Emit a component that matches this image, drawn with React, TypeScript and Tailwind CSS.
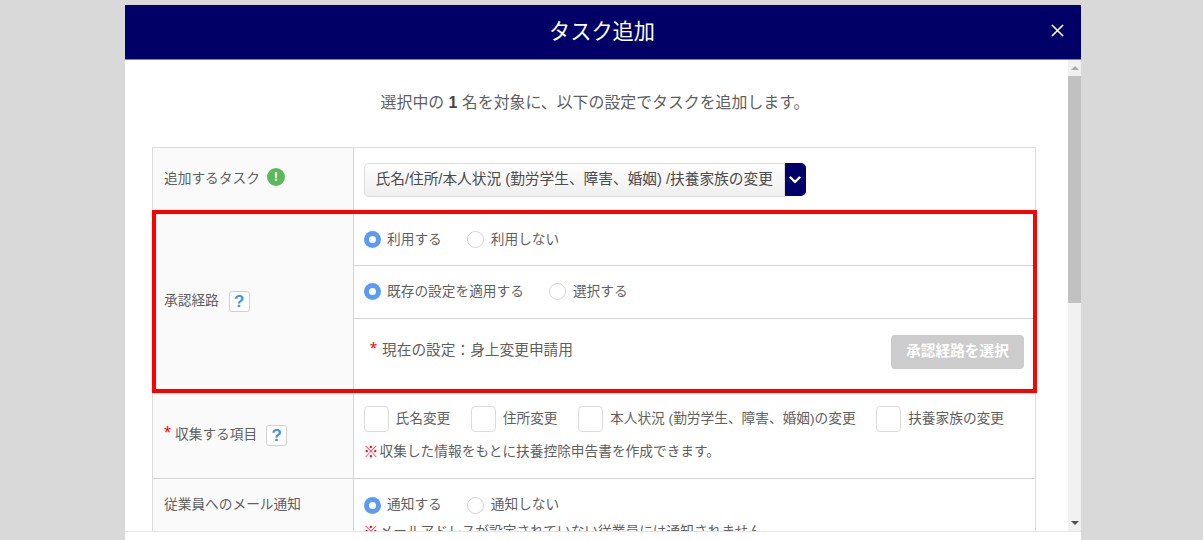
const font = '"Liberation Sans", "Noto Sans CJK JP", sans-serif';

function Radio({ on, label }: { on?: boolean; label: string }) {
  return (
    <div className="flex items-center">
      {on ? (
        <span className="w-[17px] h-[17px] rounded-full bg-[#5b9cf2] flex items-center justify-center">
          <span className="w-[7px] h-[7px] rounded-full bg-white" />
        </span>
      ) : (
        <span className="w-[17px] h-[17px] rounded-full bg-white border border-[#d4d4d4]" />
      )}
      <span className="ml-[6.5px]">{label}</span>
    </div>
  );
}

function Check({ label }: { label: string }) {
  return (
    <div className="flex items-center">
      <span className="w-[25px] h-[26px] rounded-[4px] bg-white border border-[#dcdcdc]" />
      <span className="ml-[7px]">{label}</span>
    </div>
  );
}

function Help() {
  return (
    <span className="w-[21px] h-[21px] rounded-[3px] bg-white border border-[#d0d0d0] flex items-center justify-center text-[#4a90e2] font-bold text-[17px] leading-none">
      ?
    </span>
  );
}

function Chevron() {
  return (
    <svg width="12" height="8" viewBox="0 0 12 8" fill="none" stroke="white" strokeWidth="2.4" strokeLinecap="round" strokeLinejoin="round">
      <path d="M1.5 1.5 L6 6 L10.5 1.5" />
    </svg>
  );
}

export default function App() {
  return (
    <div className="h-[540px] overflow-hidden bg-[#d9d9d9] pt-[5px] pl-[125px] text-[#5f5f5f] text-[13.7px]" style={{ fontFamily: font }}>
      <div className="w-[956px] h-[535px] bg-white flex flex-col">
        <div className="h-[55px] shrink-0 bg-[#000066] border-b border-[#8080b3] flex items-center justify-center relative text-white text-[21.2px]">
          <span className="pr-[2px]">タスク追加</span>
          <svg className="absolute right-[17px] top-[19px]" width="13" height="13" viewBox="0 0 13 13" stroke="white" strokeWidth="1.6" fill="none">
            <path d="M1 1 L12 12 M12 1 L1 12" />
          </svg>
        </div>

        <div className="h-[471px] shrink-0 flex">
          <div className="flex-1 overflow-hidden pl-[27px] pr-[32px]">
            <p className="h-[87px] pt-[32px] pl-[2px] text-center text-[15.9px] leading-[22px] whitespace-nowrap">
              選択中の <b className="text-[#444]">1</b> 名を対象に、以下の設定でタスクを追加します。
            </p>
            <div className="border border-[#dddddd] border-b-0">
              <div className="flex h-[62px]">
                <div className="w-[201px] shrink-0 bg-[#fafafa] border-r border-[#d4d4d4] pl-[11px] pt-[21px] flex items-start gap-[7px]">
                  <span className="leading-[20px]">追加するタスク</span>
                  <span className="w-[18px] h-[18px] -mt-px rounded-full bg-[#5cb85c] text-white font-bold text-[13px] flex items-center justify-center">!</span>
                </div>
                <div className="flex-1 pl-[9.5px] pt-[15px]">
                  <div className="flex w-[442px] h-[34px]">
                    <div className="w-[421px] h-[34px] rounded-l-[5px] border border-[#dcdcdc] bg-gradient-to-b from-white to-[#efefef] pl-[11px] leading-[31px] text-[14.7px] text-[#4a4a4a] whitespace-nowrap overflow-hidden">
                      氏名/住所/本人状況 (勤労学生、障害、婚姻) /扶養家族の変更
                    </div>
                    <div className="w-[21px] h-[33px] rounded-r-[5px] bg-[#000066] flex items-center justify-center">
                      <Chevron />
                    </div>
                  </div>
                </div>
              </div>

              <div className="flex h-[183px] border-[4px] border-[#ff0000] -ml-px -mr-[2px]">
                <div className="w-[198px] shrink-0 bg-[#fafafa] border-r border-[#d4d4d4] pl-[8px] flex items-center gap-[10px]">
                  <span>承認経路</span>
                  <Help />
                </div>
                <div className="flex-1 flex flex-col">
                  <div className="h-[52px] shrink-0 border-b border-[#d4d4d4] pl-[9.5px] flex items-center gap-[25.5px] pt-[1px]">
                    <Radio on label="利用する" />
                    <Radio label="利用しない" />
                  </div>
                  <div className="h-[53px] shrink-0 border-b border-[#d4d4d4] pl-[9.5px] flex items-center gap-[25.5px]">
                    <Radio on label="既存の設定を適用する" />
                    <Radio label="選択する" />
                  </div>
                  <div className="flex-1 flex items-center justify-between pl-[16px] pr-[9px] pb-[5px]">
                    <span className="text-[14.7px] leading-[20px] pb-[3px] flex items-center">
                      <span className="text-[#ff0000] text-[18px] mr-[5px] leading-none -mt-[3px]">*</span>現在の設定：身上変更申請用
                    </span>
                    <button className="w-[133px] h-[34px] rounded-[4px] bg-[#cccccc] text-white font-bold text-[14.7px]" style={{ fontFamily: font }}>
                      承認経路を選択
                    </button>
                  </div>
                </div>
              </div>

              <div className="flex h-[86px] border-b border-[#d4d4d4]">
                <div className="w-[201px] shrink-0 bg-[#fafafa] border-r border-[#d4d4d4] pl-[11px] flex items-center pb-[1px]">
                  <span className="text-[#ff0000] text-[18px] mr-[4px] leading-none -mt-[5px]">*</span>
                  <span>収集する項目</span>
                  <span className="ml-[9px]"><Help /></span>
                </div>
                <div className="flex-1 pl-[9.5px] pt-[13px]">
                  <div className="flex gap-[20.5px]">
                    <Check label="氏名変更" />
                    <Check label="住所変更" />
                    <Check label="本人状況 (勤労学生、障害、婚姻)の変更" />
                    <Check label="扶養家族の変更" />
                  </div>
                  <div className="mt-[10px] leading-[20px] whitespace-nowrap flex items-center">
                    <span className="text-[#ff0000] text-[15px] font-bold mr-[1px]">※</span>収集した情報をもとに扶養控除申告書を作成できます。
                  </div>
                </div>
              </div>

              <div className="flex h-[120px]">
                <div className="w-[201px] shrink-0 bg-[#fafafa] border-r border-[#d4d4d4] pl-[11px] pt-[16px] leading-[20px]">
                  従業員へのメール通知
                </div>
                <div className="flex-1 pl-[9.5px] pt-[16px]">
                  <div className="flex items-center gap-[25.5px]">
                    <Radio on label="通知する" />
                    <Radio label="通知しない" />
                  </div>
                  <div className="mt-[6px] leading-[20px] whitespace-nowrap flex items-center">
                    <span className="text-[#ff0000] text-[15px] font-bold mr-[1px]">※</span>メールアドレスが設定されていない従業員には通知されません。
                  </div>
                </div>
              </div>
            </div>
          </div>

          <div className="w-[13px] shrink-0 bg-[#f1f1f1] flex flex-col items-center">
            <div className="h-[16px] w-full flex items-center justify-center">
              <span className="border-x-[4px] border-x-transparent border-b-[4px] border-b-[#a9a9a9]" />
            </div>
            <div className="h-[227px] w-full bg-[#c1c1c1]" />
            <div className="flex-1" />
            <div className="h-[17px] w-full flex items-center justify-center">
              <span className="border-x-[4px] border-x-transparent border-t-[4px] border-t-[#505050]" />
            </div>
          </div>
        </div>

        <div className="flex-1 bg-white border-t border-[#e5e5e5]" />
      </div>
    </div>
  );
}
